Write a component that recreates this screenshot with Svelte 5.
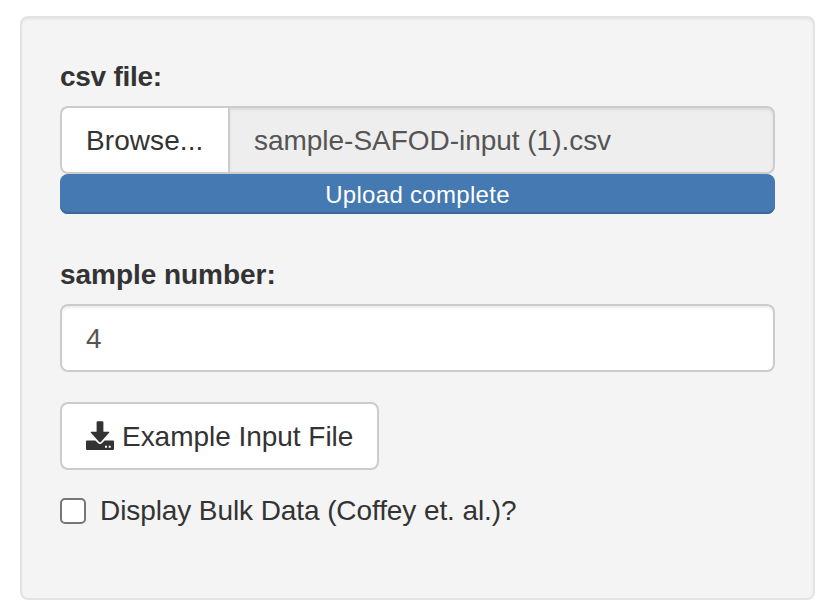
<script>
  let sample = $state('4');
  let bulk = $state(false);
</script>

<form class="well">
  <div class="group file-group">
    <label class="title csv" for="file"><span>csv file:</span></label>
    <div class="file">
      <button type="button" class="browse"><span>Browse...</span></button>
      <input id="file" class="filename" type="text" readonly value="sample-SAFOD-input (1).csv" />
    </div>
    <div class="progress"><span>Upload complete</span></div>
  </div>

  <div class="group">
    <label class="title" for="sample"><span>sample number:</span></label>
    <input id="sample" class="number" type="text" bind:value={sample} />
  </div>

  <button type="button" class="download">
    <svg width="28" height="29" viewBox="0 0 28 29" aria-hidden="true">
      <path d="M11.500 .3h5q.9 0 .9 1v9.500h5.200q1.200 0 .5 1l-8 9q-1.100 1.200-2.200 0l-8-9q-.7-1 .5-1h5.200V1.300q0-1 .9-1z" />
      <path d="M1 19.500h8.300l3.200 3q1.500 1.200 3 0l3.200-3H27q1 0 1 1V28q0 1-1 1H1q-1 0-1-1v-7.500q0-1 1-1zM19 24.800v2h2v-2zm3.700 0v2h2v-2z" fill-rule="evenodd" />
    </svg>
    <span>Example Input File</span>
  </button>

  <label class="check">
    <input type="checkbox" bind:checked={bulk} />
    <span>Display Bulk Data (Coffey et. al.)?</span>
  </label>
</form>

<style>
  :global(body) {
    background: #fff;
  }
  .well,
  .well * {
    box-sizing: border-box;
  }
  .well {
    width: 795px;
    height: 584px;
    margin: 16px 0 0 20px;
    padding: 38px;
    border: 2px solid #e3e3e3;
    border-radius: 8px;
    background: #f4f4f4;
    box-shadow: inset 0 2px 2px rgba(0, 0, 0, 0.05);
    color: #333;
    font: 28px/40px "Liberation Sans", Arial, sans-serif;
    display: flex;
    flex-direction: column;
    align-items: flex-start;
  }
  button,
  input {
    font: inherit;
    margin: 0;
  }
  .group {
    width: 100%;
    margin-bottom: 30px;
  }
  .file-group {
    margin-bottom: 40px;
  }
  .title {
    display: block;
    height: 40px;
    padding-top: 1px;
    margin-bottom: 10px;
    font-weight: bold;
    letter-spacing: -0.04px;
  }
  .csv {
    letter-spacing: -0.26px;
  }
  .file {
    display: flex;
    height: 68px;
  }
  .browse,
  .download {
    height: 68px;
    border: 2px solid #ccc;
    background: #fff;
    color: #333;
    padding: 2px 24px 0;
    white-space: nowrap;
  }
  .browse {
    width: 168px;
    flex: none;
    border-right: 0;
    border-radius: 8px 0 0 8px;
    text-align: left;
    letter-spacing: 0.08px;
  }
  .filename,
  .number {
    height: 68px;
    border: 2px solid #ccc;
    padding: 2px 24px 0;
    color: #555;
    outline: none;
    box-shadow: inset 0 2px 2px rgba(0, 0, 0, 0.075);
  }
  .filename {
    flex: 1;
    min-width: 0;
    border-radius: 0 8px 8px 0;
    background: #eee;
    letter-spacing: -0.03px;
  }
  .number {
    display: block;
    width: 100%;
    border-radius: 8px;
    background: #fff;
  }
  .progress {
    height: 40px;
    padding-top: 1px;
    border-radius: 8px;
    background: #4579b2;
    box-shadow: inset 0 -2px 0 #3b679a;
    color: #fff;
    font-size: 24px;
    letter-spacing: 0.3px;
    text-align: center;
  }
  .download {
    width: 319px;
    display: flex;
    align-items: center;
    gap: 8px;
    padding-top: 0;
    border-radius: 8px;
  }
  .download span {
    padding-top: 2px;
    letter-spacing: -0.03px;
  }
  svg {
    flex: none;
    margin-bottom: 1px;
    fill: #333;
  }
  .check {
    display: flex;
    align-items: center;
    gap: 14px;
    margin-top: 21px;
    letter-spacing: -0.09px;
    white-space: nowrap;
  }
  .check input {
    appearance: none;
    width: 26px;
    height: 26px;
    border: 2px solid #767676;
    border-radius: 5px;
    background: #fff;
  }
</style>
